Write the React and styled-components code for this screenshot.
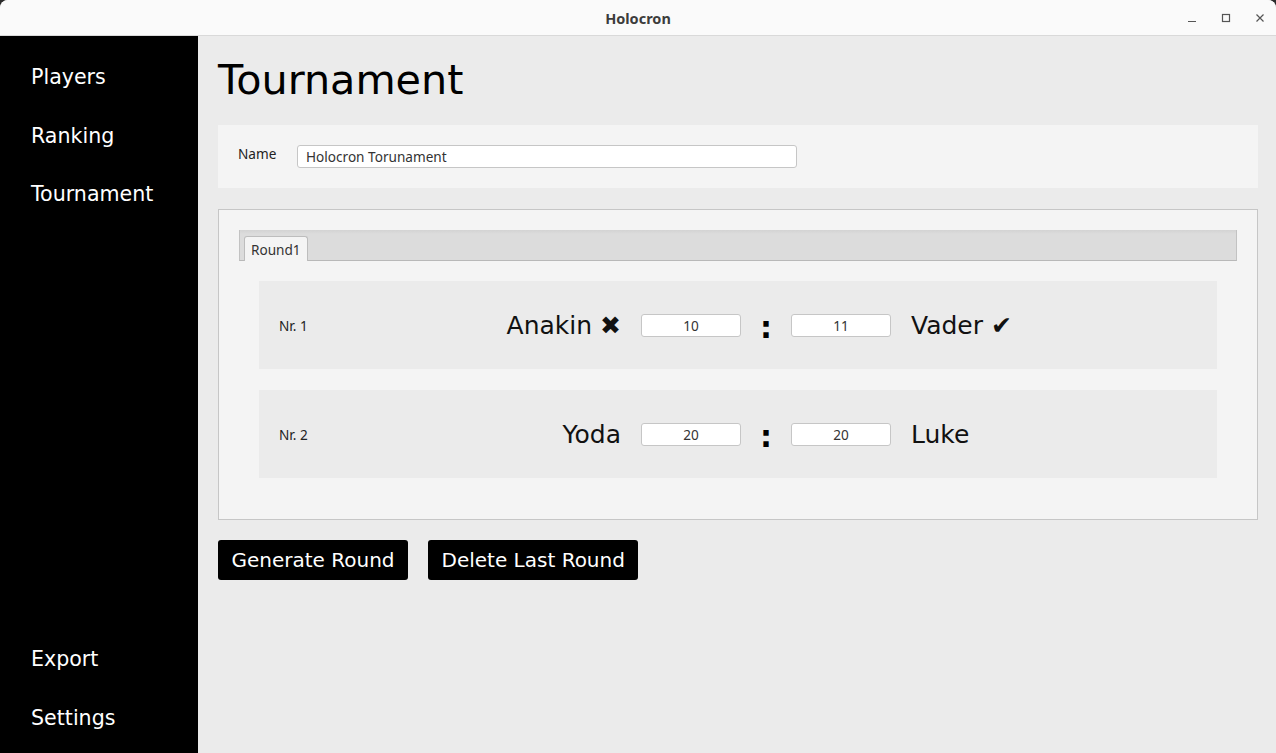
import React from "react";
import styled, { createGlobalStyle } from "styled-components";

const GlobalStyle = createGlobalStyle`
  html, body {
    margin: 0;
    padding: 0;
    height: 100%;
    background: #2b2b2b;
  }
  #root {
    height: 100%;
  }
`;

const Window = styled.div`
  width: 1276px;
  height: 753px;
  display: flex;
  flex-direction: column;
  overflow: hidden;
  border-radius: 8px 8px 0 0;
  background: #ebebeb;
  font-family: "DejaVu Sans", Verdana, sans-serif;
`;

const TitleBar = styled.div`
  height: 35px;
  flex-shrink: 0;
  position: relative;
  display: flex;
  align-items: center;
  justify-content: center;
  background: #fafafa;
  border-bottom: 1px solid #d9d9d9;
`;

const TitleText = styled.div`
  font-family: "Noto Sans", "Liberation Sans", sans-serif;
  font-weight: 700;
  font-size: 14.5px;
  color: #3c3c3c;
`;

const WindowControls = styled.div`
  position: absolute;
  right: 8px;
  top: 0;
  height: 35px;
  display: flex;
  align-items: center;
  gap: 18px;
`;

const ControlIcon = styled.svg`
  width: 16px;
  height: 16px;
  stroke: #555;
  stroke-width: 1.2;
  fill: none;
`;

const Body = styled.div`
  flex: 1;
  display: flex;
  min-height: 0;
`;

const Sidebar = styled.nav`
  width: 198px;
  flex-shrink: 0;
  background: #000;
  display: flex;
  flex-direction: column;
  padding: 12px 0 6px;
  box-sizing: border-box;
`;

const NavItem = styled.div`
  height: 58.5px;
  display: flex;
  align-items: center;
  padding-left: 31px;
  color: #fff;
  font-size: 20.6px;
`;

const Spacer = styled.div`
  flex: 1;
`;

const Main = styled.main`
  flex: 1;
  display: flex;
  flex-direction: column;
  padding: 12px 18px 0 20px;
`;

const PageTitle = styled.h1`
  margin: 0 0 12px;
  font-weight: 400;
  font-size: 41.3px;
  line-height: 65px;
  color: #000;
`;

const NamePanel = styled.div`
  height: 63px;
  box-sizing: border-box;
  background: #f4f4f4;
  display: flex;
  align-items: flex-start;
  padding: 20px 20px 0;
`;

const SmallLabel = styled.label`
  width: 59px;
  font-family: "Noto Sans", "Open Sans", sans-serif;
  font-size: 13.6px;
  line-height: 17px;
  color: #222;
`;

const TextField = styled.input`
  box-sizing: border-box;
  width: ${(p) => p.$width || 500}px;
  height: 23px;
  border: 1px solid #c6c6c6;
  border-radius: 3px;
  background: #fff;
  padding: 0 8px;
  font-family: "Noto Sans", "Open Sans", sans-serif;
  font-size: 13.6px;
  color: #333;
  text-align: ${(p) => (p.$center ? "center" : "left")};
  outline: none;
`;

const TabPanel = styled.section`
  margin-top: 21px;
  height: 311px;
  box-sizing: border-box;
  background: #f4f4f4;
  border: 1px solid #c6c6c6;
  padding: 20px;
  display: flex;
  flex-direction: column;
`;

const TabHeader = styled.div`
  height: 31px;
  box-sizing: border-box;
  background: linear-gradient(#d3d3d3, #dcdcdc 4px);
  border: 1px solid #c2c2c2;
  border-top: none;
  border-bottom: 1px solid #b8b8b8;
  display: flex;
  align-items: flex-end;
  padding-left: 4px;
`;

const Tab = styled.div`
  height: 25px;
  box-sizing: border-box;
  margin-bottom: -1px;
  padding: 0 6px;
  display: flex;
  align-items: center;
  background: #f4f4f4;
  border: 1px solid #bdbdbd;
  border-bottom: none;
  border-radius: 3px 3px 0 0;
  font-family: "Noto Sans", "Open Sans", sans-serif;
  font-size: 13.6px;
  color: #333;
`;

const Matches = styled.div`
  padding: 20px 20px 0;
  display: flex;
  flex-direction: column;
  gap: 21px;
`;

const MatchRow = styled.div`
  height: 88px;
  background: #ebebeb;
  display: flex;
  align-items: center;
  padding: 0 20px;
`;

const MatchNr = styled.div`
  width: 80px;
  font-family: "Noto Sans", "Open Sans", sans-serif;
  font-size: 13.6px;
  color: #222;
`;

const PlayerName = styled.div`
  font-size: 25px;
  color: #111;
  white-space: nowrap;
  ${(p) =>
    p.$left
      ? "width: 262px; text-align: right; margin-right: 20px;"
      : "margin-left: 20px;"}
`;

const Colon = styled.div`
  width: 50px;
  text-align: center;
  font-size: 30px;
  font-weight: 700;
  line-height: 30px;
  padding-top: 6px;
  color: #000;
`;

const Actions = styled.div`
  margin-top: 20px;
  display: flex;
  gap: 20px;
`;

const Button = styled.button`
  height: 40px;
  padding: 0 13.5px;
  border: none;
  border-radius: 3px;
  background: #000;
  color: #fff;
  font-family: "DejaVu Sans", Verdana, sans-serif;
  font-size: 20px;
  cursor: pointer;
`;

const matches = [
  { nr: 1, home: "Anakin", homeMark: " ✖", away: "Vader", awayMark: " ✔", a: "10", b: "11" },
  { nr: 2, home: "Yoda", homeMark: "", away: "Luke", awayMark: "", a: "20", b: "20" },
];

export default function App() {
  return (
    <>
      <GlobalStyle />
      <Window>
        <TitleBar>
          <TitleText>Holocron</TitleText>
          <WindowControls>
            <ControlIcon viewBox="0 0 16 16">
              <path d="M4 11.5h8" />
            </ControlIcon>
            <ControlIcon viewBox="0 0 16 16">
              <rect x="4.5" y="4.5" width="7" height="7" />
            </ControlIcon>
            <ControlIcon viewBox="0 0 16 16">
              <path d="M4.5 4.5l7 7M11.5 4.5l-7 7" />
            </ControlIcon>
          </WindowControls>
        </TitleBar>
        <Body>
          <Sidebar>
            <NavItem>Players</NavItem>
            <NavItem>Ranking</NavItem>
            <NavItem>Tournament</NavItem>
            <Spacer />
            <NavItem>Export</NavItem>
            <NavItem>Settings</NavItem>
          </Sidebar>
          <Main>
            <PageTitle>Tournament</PageTitle>
            <NamePanel>
              <SmallLabel>Name</SmallLabel>
              <TextField defaultValue="Holocron Torunament" />
            </NamePanel>
            <TabPanel>
              <TabHeader>
                <Tab>Round1</Tab>
              </TabHeader>
              <Matches>
                {matches.map((m) => (
                  <MatchRow key={m.nr}>
                    <MatchNr>Nr. {m.nr}</MatchNr>
                    <PlayerName $left>
                      {m.home}
                      {m.homeMark}
                    </PlayerName>
                    <TextField $width={100} $center defaultValue={m.a} />
                    <Colon>:</Colon>
                    <TextField $width={100} $center defaultValue={m.b} />
                    <PlayerName>
                      {m.away}
                      {m.awayMark}
                    </PlayerName>
                  </MatchRow>
                ))}
              </Matches>
            </TabPanel>
            <Actions>
              <Button>Generate Round</Button>
              <Button>Delete Last Round</Button>
            </Actions>
          </Main>
        </Body>
      </Window>
    </>
  );
}
